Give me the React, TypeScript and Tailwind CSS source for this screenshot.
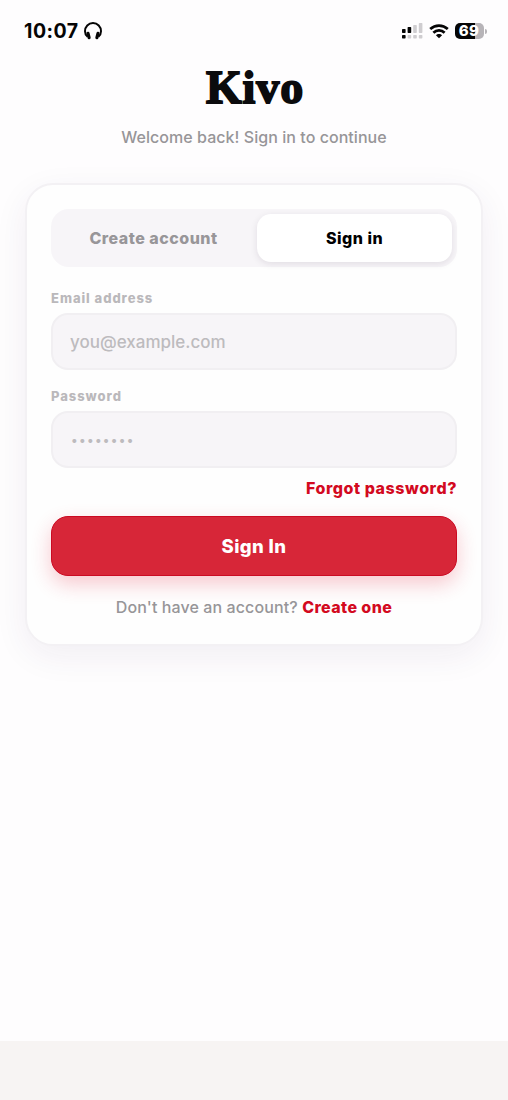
import { useState } from "react";

function HeadphonesIcon() {
  return (
    <svg width="18" height="18" viewBox="0 0 18 18" fill="none" stroke="#050505">
      <path d="M3.6 14.8C1.900 13.400 1 11.400 1 9.200C1 4.600 4.400 1.100 9 1.100s8 3.500 8 8.100c0 2.200-.9 4.200-2.600 5.600" strokeWidth="2" />
      <path d="M4 11.400l1.100 4.200M14 11.400l-1.100 4.200" strokeWidth="3.200" strokeLinecap="round" />
    </svg>
  );
}

function SignalIcon() {
  return (
    <svg width="21" height="16" viewBox="0 0 21 16">
      <g fill="#050505">
        <rect x="0" y="6" width="3.6" height="4" rx=".7" />
        <rect x="5.6" y="4" width="3.6" height="6" rx=".7" />
        <rect x="0" y="12" width="3.6" height="3.5" rx=".7" />
      </g>
      <g fill="#cfcdd0">
        <rect x="11.2" y="2" width="3.6" height="8" rx=".7" />
        <rect x="16.8" y="0" width="3.6" height="10" rx=".7" />
        <rect x="5.6" y="12" width="3.6" height="3.5" rx=".7" />
        <rect x="11.2" y="12" width="3.6" height="3.5" rx=".7" />
        <rect x="16.8" y="12" width="3.6" height="3.5" rx=".7" />
      </g>
    </svg>
  );
}

function WifiIcon() {
  return (
    <svg width="20" height="15" viewBox="0 0 20 15" fill="none" stroke="#050505" strokeWidth="2.7">
      <path d="M1.200 5.100C3.600 2.900 6.600 1.600 10 1.600s6.400 1.300 8.800 3.500" />
      <path d="M4.400 8.700C5.900 7.200 7.800 6.300 10 6.300s4.100.9 5.600 2.400" />
      <path d="M10 14.200L6.900 11.200c.8-.8 1.900-1.300 3.100-1.300s2.300.5 3.100 1.300z" fill="#050505" stroke="none" />
    </svg>
  );
}

function Battery({ level }: { level: number }) {
  return (
    <div className="flex items-center gap-px">
      <div className="flex h-4 w-[29px] items-center justify-center rounded-[5px] bg-[linear-gradient(90deg,#050505_69%,#b7b4b8_69%)] pr-px text-[15px] leading-4 font-extrabold tracking-[0.4px] text-white">
        {level}
      </div>
      <div className="h-[5px] w-[2px] rounded-r-full bg-[#b7b4b8]" />
    </div>
  );
}

function StatusBar() {
  return (
    <div className="flex h-[62px] items-center justify-between pr-[21px] pl-6">
      <div className="flex items-center gap-[5px]">
        <span className="text-[19.5px] leading-6 font-bold tracking-[0.5px] text-[#050505]">10:07</span>
        <HeadphonesIcon />
      </div>
      <div className="flex items-center gap-[6px]">
        <SignalIcon />
        <WifiIcon />
        <Battery level={69} />
      </div>
    </div>
  );
}

type FieldProps = {
  label: string;
  type: string;
  placeholder: string;
  value: string;
  onChange: (value: string) => void;
};

function Field({ label, type, placeholder, value, onChange }: FieldProps) {
  const placeholderClass =
    type === "password" ? "placeholder:text-[12.5px] placeholder:tracking-[1.3px] pl-[18px] pb-[2px]" : "pl-[17px]";

  return (
    <label className="block">
      <span className="block text-[13px] leading-[18px] font-extrabold tracking-[0.95px] text-[#bab8bb]">{label}</span>
      <input
        type={type}
        value={value}
        onChange={(e) => onChange(e.target.value)}
        placeholder={placeholder}
        className={`mt-[6px] block h-[57px] w-full rounded-[17px] border-2 border-[#f1eff2] bg-[#f7f5f8] pr-[17px] text-[17px] font-medium text-black placeholder-[#bdbbbe] focus:outline-none ${placeholderClass}`}
      />
    </label>
  );
}

export default function App() {
  const [mode, setMode] = useState<"create" | "signin">("signin");
  const [email, setEmail] = useState("");
  const [password, setPassword] = useState("");

  const tabClass = (active: boolean) =>
    active
      ? "flex-1 rounded-[14px] bg-white text-black shadow-[0_2px_7px_rgba(40,20,50,0.10)]"
      : "flex-1 rounded-[14px] text-[#989699]";

  return (
    <div className="flex h-[1100px] w-full flex-col overflow-hidden bg-[#fefdfe] font-['Inter',sans-serif]">
      <StatusBar />

      <header className="text-center">
        <h1 className="h-[52px] pl-[2px] font-['Liberation_Serif',serif] text-[46px] leading-[52px] font-bold tracking-[0.9px] text-[#0b0b0d] [-webkit-text-stroke:1.8px_#0b0b0d]">
          Kivo
        </h1>
        <p className="mt-[11px] text-[16px] leading-6 font-medium tracking-[0.05px] text-[#979598]">Welcome back! Sign in to continue</p>
      </header>

      <main className="mx-[25px] mt-[34px] h-[463px] rounded-[28px] border-2 border-[#f3f1f4] bg-[#fefefe] px-6 pt-6 shadow-[0_10px_34px_rgba(60,30,90,0.065)]">
        <div className="flex h-[58px] gap-[6px] rounded-[18px] bg-[#f7f5f8] p-[5px] text-[16px] font-extrabold tracking-[0.5px]">
          <button onClick={() => setMode("create")} className={tabClass(mode === "create")}>
            Create account
          </button>
          <button onClick={() => setMode("signin")} className={tabClass(mode === "signin")}>
            Sign in
          </button>
        </div>

        <div className="mt-[22px] flex flex-col gap-[17px]">
          <Field label="Email address" type="email" placeholder="you@example.com" value={email} onChange={setEmail} />
          <Field label="Password" type="password" placeholder="••••••••" value={password} onChange={setPassword} />
        </div>

        <div className="mt-[9px] flex justify-end">
          <button className="text-[16px] leading-[22px] font-extrabold tracking-[0.55px] text-[#d30a1f]">Forgot password?</button>
        </div>

        <button className="mt-[17px] block h-[60px] w-full rounded-[17px] border border-[#cb0a22] bg-[#d72638] pt-[2px] text-[18.5px] font-extrabold tracking-[0.4px] text-white shadow-[0_8px_20px_rgba(225,30,55,0.24)]">
          Sign In
        </button>

        <p className="mt-[19px] text-center text-[16px] leading-6 font-medium tracking-[0.1px] text-[#979598]">
          Don't have an account? <button className="font-extrabold tracking-[0.4px] text-[#d30a1f]">Create one</button>
        </p>
      </main>

      <div className="mt-auto h-[59px] bg-[#f7f4f3]" />
    </div>
  );
}
